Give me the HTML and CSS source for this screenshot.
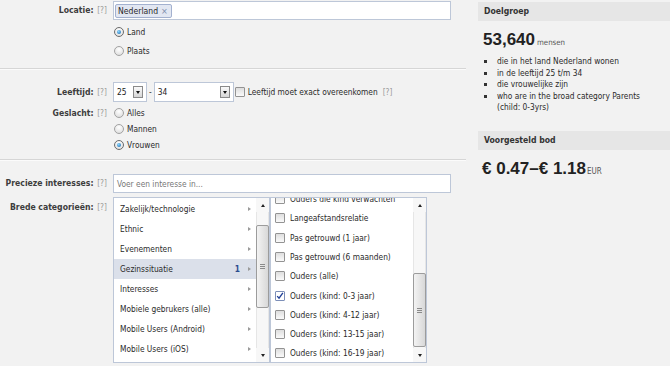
FILE: index.html
```html
<!DOCTYPE html>
<html lang="nl">
<head>
<meta charset="utf-8">
<title>Doelgroep</title>
<link rel="stylesheet" href="styles.css">
</head>
<body>
<div class="page">
  <div class="main">
    <section class="sec sec-loc">
      <div class="row">
        <div class="lbl lbl-input">Locatie: <span class="q">[?]</span></div>
        <div class="fld">
          <div class="textbox"><span class="token">Nederland<span class="tx">×</span></span></div>
          <div class="opts opts-loc">
            <div class="opt"><span class="radio on"></span>Land</div>
            <div class="opt"><span class="radio"></span>Plaats</div>
          </div>
        </div>
      </div>
    </section>

    <section class="sec sec-demo">
      <div class="row">
        <div class="lbl lbl-sel">Leeftijd: <span class="q">[?]</span></div>
        <div class="fld age">
          <div class="select s1"><span>25</span><span class="sbtn"></span></div>
          <span class="dash">-</span>
          <div class="select s2"><span>34</span><span class="sbtn"></span></div>
          <span class="cb"></span>
          <span class="exact">Leeftijd moet exact overeenkomen</span>
          <span class="q qx">[?]</span>
        </div>
      </div>
      <div class="row gender">
        <div class="lbl lbl-opt">Geslacht: <span class="q">[?]</span></div>
        <div class="fld opts opts-g">
          <div class="opt"><span class="radio"></span>Alles</div>
          <div class="opt"><span class="radio"></span>Mannen</div>
          <div class="opt"><span class="radio on"></span>Vrouwen</div>
        </div>
      </div>
    </section>

    <section class="sec-int">
      <div class="row">
        <div class="lbl lbl-input">Precieze interesses: <span class="q">[?]</span></div>
        <div class="fld">
          <div class="textbox placeholder">Voer een interesse in...</div>
        </div>
      </div>
      <div class="row cats-row">
        <div class="lbl lbl-box">Brede categorieën: <span class="q">[?]</span></div>
        <div class="fld boxes">
          <div class="box box-l">
            <div class="list">
              <div class="item">Zakelijk/technologie<span class="arr"></span></div>
              <div class="item">Ethnic<span class="arr"></span></div>
              <div class="item">Evenementen<span class="arr"></span></div>
              <div class="item sel">Gezinssituatie<span class="cnt">1</span><span class="arr"></span></div>
              <div class="item">Interesses<span class="arr"></span></div>
              <div class="item">Mobiele gebrukers (alle)<span class="arr"></span></div>
              <div class="item">Mobile Users (Android)<span class="arr"></span></div>
              <div class="item">Mobile Users (iOS)<span class="arr"></span></div>
            </div>
            <div class="sb">
              <div class="sb-btn"><span class="up"></span></div>
              <div class="sb-track"><div class="thumb thumb-l"><span class="grip"></span></div></div>
              <div class="sb-btn"><span class="down"></span></div>
            </div>
          </div>
          <div class="box box-r">
            <div class="list checks">
              <div class="chk"><span class="cb"></span>Ouders die kind verwachten</div>
              <div class="chk"><span class="cb"></span>Langeafstandsrelatie</div>
              <div class="chk"><span class="cb"></span>Pas getrouwd (1 jaar)</div>
              <div class="chk"><span class="cb"></span>Pas getrouwd (6 maanden)</div>
              <div class="chk"><span class="cb"></span>Ouders (alle)</div>
              <div class="chk"><span class="cb on"><svg viewBox="0 0 10 10" width="8" height="8"><path d="M1.5 5.2 L3.8 7.8 L8.6 1.2" fill="none" stroke="#1f3f96" stroke-width="1.7"/></svg></span>Ouders (kind: 0-3 jaar)</div>
              <div class="chk"><span class="cb"></span>Ouders (kind: 4-12 jaar)</div>
              <div class="chk"><span class="cb"></span>Ouders (kind: 13-15 jaar)</div>
              <div class="chk"><span class="cb"></span>Ouders (kind: 16-19 jaar)</div>
            </div>
            <div class="sb">
              <div class="sb-btn"><span class="up"></span></div>
              <div class="sb-track"><div class="thumb thumb-r"><span class="grip"></span></div></div>
              <div class="sb-btn"><span class="down"></span></div>
            </div>
          </div>
        </div>
      </div>
    </section>
  </div>

  <aside class="side">
    <div class="hdr">Doelgroep</div>
    <div class="big">53,640<span class="unit">mensen</span></div>
    <ul class="bul">
      <li>die in het land Nederland wonen</li>
      <li>in de leeftijd 25 t/m 34</li>
      <li>die vrouwelijke zijn</li>
      <li>who are in the broad category Parents<br>(child: 0-3yrs)</li>
    </ul>
    <div class="hdr hdr2">Voorgesteld bod</div>
    <div class="big bid">€ 0.47–€ 1.18<span class="unit">EUR</span></div>
  </aside>
</div>
</body>
</html>
```

FILE: styles.css
```css
* { box-sizing: border-box; margin: 0; padding: 0; }
html, body { width: 670px; height: 366px; overflow: hidden; }
body {
  background: #f2f2f2;
  font-family: "DejaVu Sans Condensed", "DejaVu Sans", sans-serif;
  font-size: 8.3px;
  color: #2a2a2a;
}
.page { display: flex; height: 366px; }
.main { width: 466px; flex: none; }
.side { width: 192px; margin-left: 12px; padding-top: 2px; flex: none; }

/* sections */
.sec { border-bottom: 1px solid #d6d6d6; box-shadow: 0 1px 0 #fbfbfb; }
.sec-loc { padding: 1px 0 8px; }
.sec-demo { padding: 13px 0 6px; }
.sec-int { padding-top: 14px; }

.row { display: flex; align-items: flex-start; }
.lbl {
  width: 107px; flex: none; text-align: right; white-space: nowrap;
  font-weight: bold; font-size: 8.6px; color: #3d3d3d;
}
.q { font-weight: normal; color: #9a9a9a; margin-left: 1px; font-size: 8.3px; }
.lbl-input { line-height: 19px; }
.lbl-sel { line-height: 20px; }
.lbl-opt { line-height: 16px; }
.lbl-box { padding-top: 3px; line-height: 14px; }
.fld { margin-left: 6px; }

/* text inputs */
.textbox {
  width: 338px; height: 19px; background: #fff;
  border: 1px solid #bdc7d8; display: flex; align-items: center;
}
.token {
  display: inline-flex; align-items: center; height: 14px;
  margin-left: 1px; padding: 0 3px 0 2px;
  background: #e2e7f2; border: 1px solid #a3b1cf; border-radius: 2px;
  color: #2a2a2a; font-size: 8.6px;
}
.tx { color: #7d8cab; margin-left: 3px; font-size: 9px; }
.placeholder { padding-left: 3px; color: #777; }

/* radios */
.opts-loc { margin-top: 2px; }
.opt { display: flex; align-items: center; height: 19px; }
.opts-g .opt { height: 16px; }
.radio {
  width: 10px; height: 10px; flex: none; border-radius: 50%;
  border: 1px solid #a2a2a2; margin: 0 3px 0 1px; position: relative;
  background: radial-gradient(circle at 50% 30%, #ffffff, #d9d9d9);
}
.radio.on { border-color: #6b6b6b; }
.radio.on::after {
  content: ""; position: absolute; left: 2px; top: 2px; width: 4px; height: 4px;
  border-radius: 50%; background: radial-gradient(circle at 40% 35%, #8fd8ff, #0b5fa8);
}

/* age row */
.age { display: flex; align-items: center; height: 20px; }
.select {
  height: 20px; background: #fff; border: 1px solid #bdc7d8;
  display: flex; align-items: center; padding-left: 3px; color: #222;
}
.s1 { width: 34px; }
.s2 { width: 80px; }
.sbtn {
  margin-left: auto; margin-right: 3px; width: 10px; height: 12px; position: relative;
  border: 1px solid #8a8a8a; background: linear-gradient(#fafafa, #d6d6d6);
}
.sbtn::after {
  content: ""; position: absolute; left: 2px; top: 4px;
  border-left: 2.5px solid transparent; border-right: 2.5px solid transparent;
  border-top: 3px solid #111;
}
.dash { margin: 0 2px 0 2px; }
.age .cb { margin-left: 1px; }
.exact { margin-left: 3px; }
.qx { margin-left: 5px; }
.gender { margin-top: 3px; }

/* checkbox */
.cb {
  width: 10px; height: 10px; flex: none; border: 1px solid #939393;
  background: linear-gradient(#dedede, #fafafa); border-radius: 1px;
  display: inline-flex; align-items: center; justify-content: center;
}
.cb.on { background: #fff; border-color: #7d8fb8; }

/* category boxes */
.cats-row { margin-top: 4px; }
.boxes { display: flex; }
.box {
  height: 166px; background: #fff; border: 1px solid #bdc7d8;
  display: flex; overflow: hidden;
}
.box-l { width: 157px; }
.box-r { width: 157px; }
.list { flex: 1; overflow: hidden; }
.box-l .list { padding-top: 1px; }
.item {
  height: 20px; display: flex; align-items: center; padding: 0 5px 0 6px;
}
.item.sel { background: #dbe0ea; }
.arr {
  margin-left: auto; width: 0; height: 0;
  border-left: 3px solid #9a9a9a; border-top: 2.5px solid transparent; border-bottom: 2.5px solid transparent;
}
.cnt { margin-left: auto; color: #2b4b8f; font-weight: bold; margin-right: 8px; }
.cnt + .arr { margin-left: 0; }

.checks { padding-left: 4px; }
.checks .chk:first-child { margin-top: -8.6px; }
.chk { height: 19.3px; display: flex; align-items: center; }
.chk .cb { margin-right: 5px; }

/* scrollbars */
.sb { width: 13px; flex: none; display: flex; flex-direction: column; background: #f7f7f7; }
.sb-btn { height: 14px; display: flex; align-items: center; justify-content: center; }
.up { border-left: 2.5px solid transparent; border-right: 2.5px solid transparent; border-bottom: 3px solid #222; }
.down { border-left: 2.5px solid transparent; border-right: 2.5px solid transparent; border-top: 3px solid #222; }
.sb-track { flex: 1; border-left: 1px solid #e6e6e6; border-right: 1px solid #e6e6e6; }
.thumb {
  margin: 0 -1px; border: 1px solid #9c9c9c; border-radius: 2px;
  background: linear-gradient(90deg, #f3f3f3, #d8d8d8);
  display: flex; align-items: center; justify-content: center;
}
.thumb-l { margin-top: 13px; height: 83px; }
.thumb-r { margin-top: 61px; height: 74px; }
.grip {
  width: 5px; height: 5px;
  background: repeating-linear-gradient(#8a8a8a 0 1px, transparent 1px 2px);
}

/* side panel */
.hdr {
  height: 19px; line-height: 19px; background: #e6e6e6; padding-left: 6px;
  font-weight: bold; font-size: 8.6px; color: #333;
}
.big {
  margin-top: 9px; padding-left: 5px; height: 20px; line-height: 20px;
  font-family: "Liberation Sans", Arial, sans-serif; font-weight: bold; font-size: 17px; color: #222;
}
.unit {
  font-family: "DejaVu Sans Condensed", "DejaVu Sans", sans-serif;
  font-weight: normal; font-size: 7.8px; color: #555; margin-left: 2px;
}
.bul { list-style: none; margin-top: 6px; line-height: 11.5px; }
.bul li { position: relative; padding-left: 19px; }
.bul li::before {
  content: ""; position: absolute; left: 6px; top: 4px; width: 3px; height: 3px; background: #333;
}
.hdr2 { margin-top: 17.5px; }
.bid { margin-top: 9px; padding-left: 4px; }
.bid .unit { font-size: 8px; margin-left: 1px; }
```
